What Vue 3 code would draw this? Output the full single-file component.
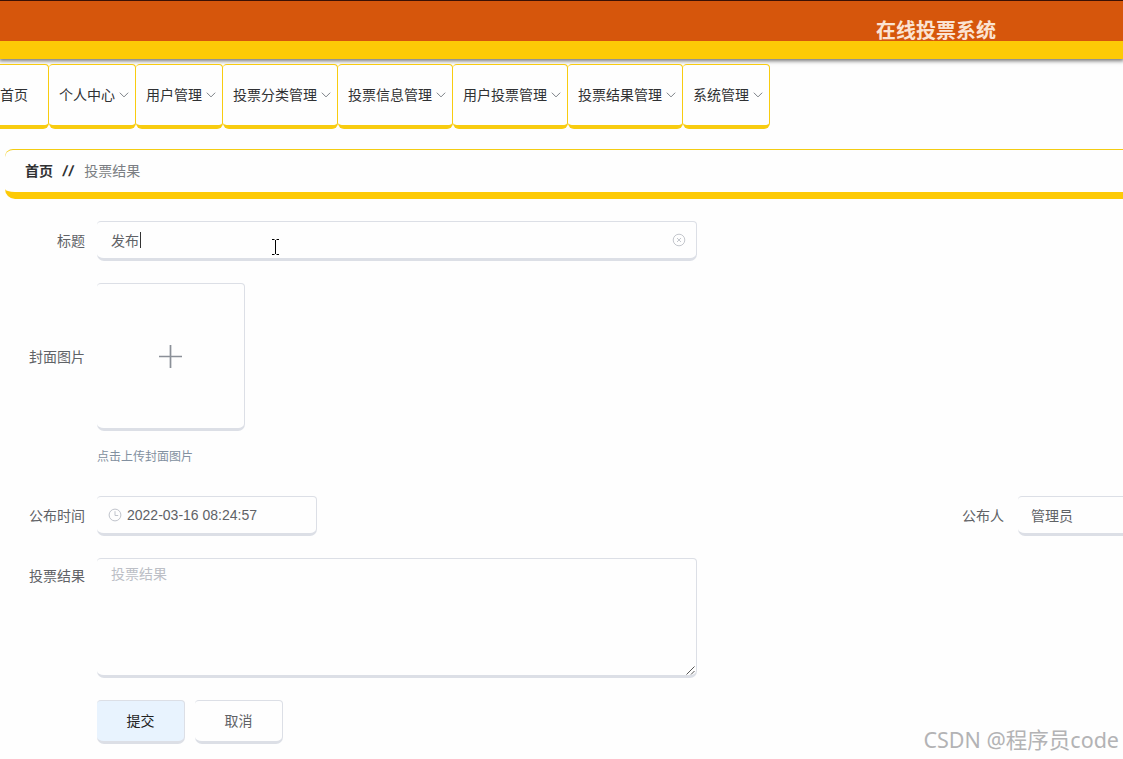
<script setup>
const menus = ['个人中心', '用户管理', '投票分类管理', '投票信息管理', '用户投票管理', '投票结果管理', '系统管理']
</script>

<template>
  <div class="page">
    <header class="header"><h1>在线投票系统</h1></header>
    <nav class="nav">
      <div class="item home">首页</div>
      <div v-for="m in menus" :key="m" class="item">
        <span>{{ m }}</span>
        <svg width="10" height="6" viewBox="0 0 10 6"><path d="M.8.7 5 4.9 9.2.7" fill="none" stroke="#7d8288" stroke-width="1" /></svg>
      </div>
    </nav>
    <div class="crumb"><b>首页</b><b class="sep">//</b><span>投票结果</span></div>

    <main class="form">
      <div class="row title-row">
        <label>标题</label>
        <div class="box field wide">
          <span class="value">发布</span><i class="caret"></i>
          <svg class="clear" width="14" height="14" viewBox="0 0 14 14" fill="none" stroke="#c4c7cd"><circle cx="7" cy="7" r="5.8" /><path d="m5 5 4 4M9 5 5 9" /></svg>
        </div>
      </div>
      <div class="row upload-row">
        <label>封面图片</label>
        <div class="box upload">
          <svg width="24" height="24" viewBox="0 0 24 24"><path d="M11.5 1v23M0 12.5h23" stroke="#8b9098" stroke-width="1.7" /></svg>
        </div>
      </div>
      <div class="hint">点击上传封面图片</div>
      <div class="row date-row">
        <label>公布时间</label>
        <div class="box field date">
          <svg width="14" height="14" viewBox="0 0 14 14" fill="none" stroke="#c0c4cc"><circle cx="7" cy="7" r="5.9" /><path d="M7 3.2V7.5H10.2" /></svg>
          <span>2022-03-16 08:24:57</span>
        </div>
        <label class="publisher">公布人</label>
        <div class="box field person"><span class="value">管理员</span></div>
      </div>
      <div class="row area-row">
        <label>投票结果</label>
        <div class="box area">
          投票结果
          <svg class="grip" width="9" height="9" viewBox="0 0 9 9"><path d="M.5 8.5l8-8M5 8.5 8.5 5" fill="none" stroke="#555" /></svg>
        </div>
      </div>
      <div class="actions">
        <button class="box submit">提交</button>
        <button class="box">取消</button>
      </div>
    </main>

    <svg class="pointer" width="9" height="17" viewBox="0 0 9 17"><path d="M1 .5h2.5M5.5.5H8M1 15.5h2.5M5.5 15.5H8M4.5 1v14" fill="none" stroke="#000" /></svg>
    <div class="watermark">CSDN @程序员code</div>
  </div>
</template>

<style>
body { margin: 0; overflow: hidden; background: #fefefe; }
</style>

<style scoped>
* { box-sizing: border-box; }
.page {
  position: relative;
  width: 1123px;
  height: 759px;
  overflow: hidden;
  background: #fefefe;
  color: #606266;
  font: 14px/20px "Liberation Sans", "Noto Sans CJK SC", sans-serif;
}
.header {
  height: 59px;
  padding: 16px 0 0 876px;
  border-top: 1px solid #3b1004;
  background: linear-gradient(#d6560c 40px, #fdca06 40px);
  box-shadow: 0 1px 4px 1px rgba(0, 0, 0, .55);
}
h1 { margin: 0; font-size: 20px; line-height: 28px; font-weight: 700; color: #fbe3d2; white-space: nowrap; }
.nav { display: flex; height: 65px; margin-top: 5px; }
.item {
  display: flex;
  align-items: center;
  gap: 4px;
  flex: none;
  padding: 0 6px 0 10px;
  border: 1px solid #f8cc10;
  border-width: 1px 1px 4px 0;
  border-radius: 4px 4px 6px 6px;
  background: #fefefe;
  color: #303133;
}
.item.home { width: 49px; padding: 0; border-radius: 0 4px 6px 0; }
.crumb {
  display: flex;
  align-items: center;
  height: 50px;
  margin: 20px 0 0 5px;
  padding-left: 20px;
  border-top: 1px solid #f3cc12;
  border-bottom: 7px solid #fdca06;
  border-radius: 8px 0 0 10px;
}
.crumb b { color: #303133; }
.crumb .sep { margin: 0 9px 0 10px; font-size: 15px; letter-spacing: 2px; transform: skewX(-12deg); }
.crumb span { color: #7b7e83; }
.form { padding-top: 22px; }
.row { display: flex; }
label { flex: none; width: 85px; margin-right: 12px; line-height: 40px; text-align: right; }
.box {
  flex: none;
  border: 1px solid #dcdfe6;
  border-width: 1px 1px 3px 0;
  border-radius: 4px 4px 7px 7px;
  background: #fefefe;
}
.field { display: flex; align-items: center; height: 40px; padding-left: 14px; }
.value { padding-top: 2px; }
.wide { width: 600px; padding-right: 10px; }
.caret { width: 1px; height: 16px; margin-left: 1px; background: #333; }
.clear { margin-left: auto; }
.upload-row { margin-top: 22px; align-items: center; }
.upload { display: flex; align-items: center; justify-content: center; width: 148px; height: 148px; }
.hint { margin: 16px 0 0 97px; color: #8290a0; font-size: 12px; }
.date-row { margin-top: 29px; }
.date { width: 220px; padding-left: 11px; gap: 5px; }
.publisher { width: 88px; margin-left: 599px; margin-right: 14px; }
.person { width: 220px; padding-left: 13px; }
.area-row { margin-top: 22px; }
.area-row label { line-height: 36px; }
.area { position: relative; width: 600px; height: 120px; padding: 5px 14px; color: #bcbfc6; }
.grip { position: absolute; right: 1px; bottom: 0; }
.actions { display: flex; gap: 10px; margin: 22px 0 0 97px; }
button { width: 88px; height: 44px; padding: 0; color: #606266; font: inherit; }
.submit { background: #e8f3fe; color: #222; }
.pointer { position: absolute; left: 271px; top: 239px; }
.watermark {
  position: absolute;
  right: 4px;
  bottom: 5px;
  color: #b3b3b5;
  font-family: "Noto Sans", "Noto Sans CJK SC", sans-serif;
  font-size: 21.5px;
  line-height: 28px;
  white-space: nowrap;
}
</style>
